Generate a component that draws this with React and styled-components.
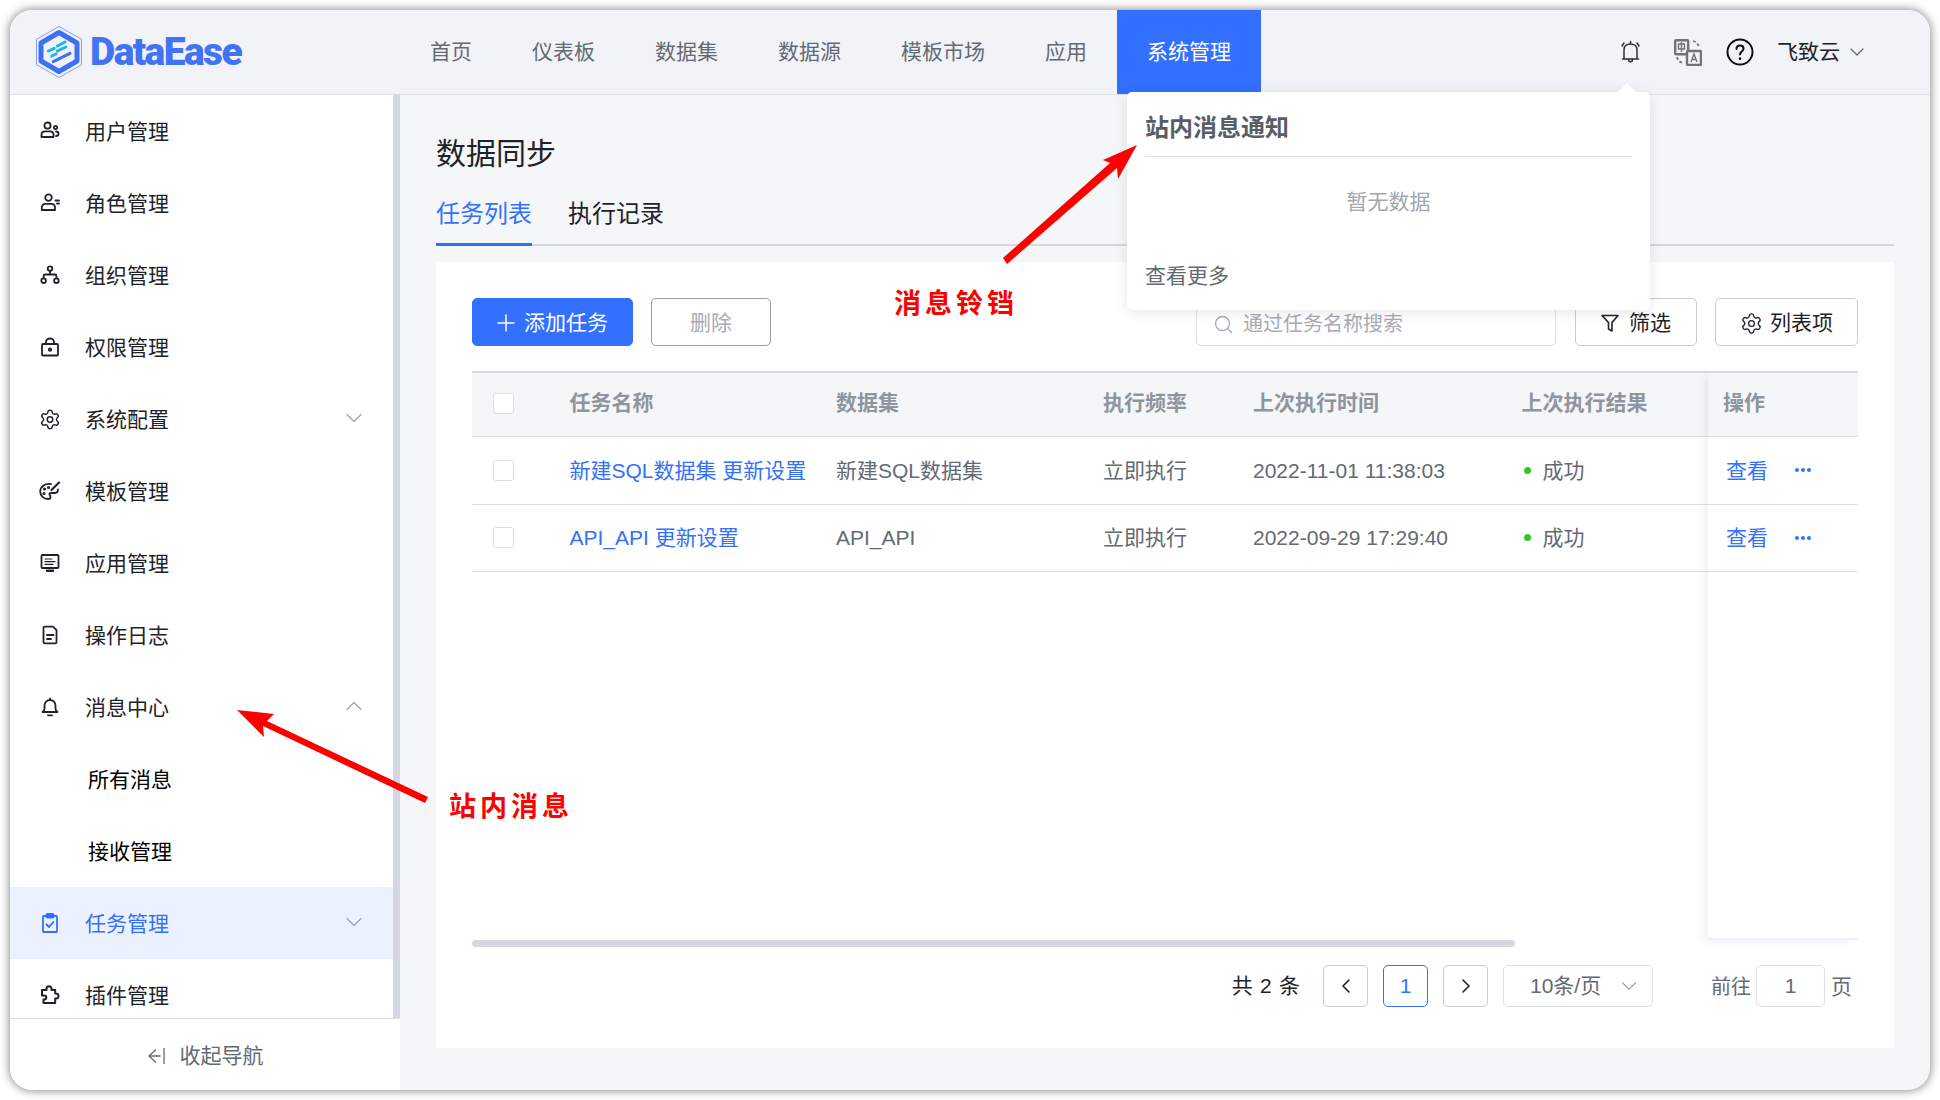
import React from 'react'
import styled, { createGlobalStyle } from 'styled-components'
import { ChevronDown, ChevronUp, ChevronLeft, ChevronRight, Settings } from 'lucide-react'

const GlobalStyle = createGlobalStyle`
  html, body { margin: 0; padding: 0; background: #fff; }
  * { box-sizing: border-box; }
  body { font-family: "Liberation Sans", "Noto Sans CJK SC", sans-serif; line-height: 1.4; color: #1f2329; }
`

const Frame = styled.div`
  padding: 10px;
  width: 1940px;
  height: 1100px;
`

const Window = styled.div`
  position: relative;
  width: 1920px;
  height: 1080px;
  border-radius: 22px;
  overflow: hidden;
  display: flex;
  flex-direction: column;
  background: #f5f6f8;
  box-shadow: 0 0 8px 1px rgba(0, 0, 0, 0.45);
`

const Header = styled.header`
  height: 85px;
  flex: none;
  display: flex;
  align-items: stretch;
  background: #f1f3f8;
  border-bottom: 1px solid #dee0e3;
`

const LogoWrap = styled.div`
  width: 390px;
  padding-left: 26px;
  display: flex;
  align-items: center;
  gap: 8px;
`

const LogoText = styled.span`
  font-family: "Roboto", "Liberation Sans", sans-serif;
  font-weight: 900;
  font-size: 39px;
  letter-spacing: -1.6px;
  color: #4273f5;
`

const Nav = styled.nav`
  display: flex;
`

const NavItem = styled.a`
  padding: 0 30px;
  display: flex;
  align-items: center;
  font-size: 21px;
  color: ${p => (p.$active ? '#fff' : '#646a73')};
  background: ${p => (p.$active ? '#3370ff' : 'transparent')};
`

const HeaderRight = styled.div`
  margin-left: auto;
  padding-right: 61px;
  display: flex;
  align-items: center;
`

const HeaderIcon = styled.span`
  display: flex;
  margin-right: ${p => p.$gap}px;
`

const UserName = styled.span`
  font-size: 21px;
  color: #1f2329;
  margin-right: 5px;
`

const Body = styled.div`
  flex: 1;
  display: flex;
  min-height: 0;
`

const Sidebar = styled.aside`
  width: 390px;
  flex: none;
  display: flex;
  flex-direction: column;
  background: #fff;
`

const MenuWrap = styled.div`
  flex: 1;
  min-height: 0;
  display: flex;
`

const Menu = styled.div`
  flex: 1;
  overflow: hidden;
`

const MenuBar = styled.div`
  width: 7px;
  background: #d5d8e2;
`

const MenuItem = styled.div`
  height: 72px;
  display: flex;
  align-items: center;
  padding: 2px 25px 0 ${p => (p.$sub ? 78 : 29)}px;
  font-size: 21px;
  color: ${p => (p.$active ? '#3370ff' : p.$sub ? '#000' : '#1f2329')};
  background: ${p => (p.$active ? '#ebf1ff' : 'transparent')};
`

const MenuIcon = styled.span`
  width: 22px;
  display: flex;
  justify-content: center;
  margin-right: 24px;
  margin-top: -2px;
`

const MenuChevron = styled.span`
  margin-left: auto;
  margin-top: -4px;
  display: flex;
  color: #a0a5ae;
`

const SideFooter = styled.div`
  height: 72px;
  flex: none;
  padding-top: 2px;
  border-top: 1px solid #dee0e3;
  display: flex;
  align-items: center;
  justify-content: center;
  gap: 15px;
  font-size: 21px;
  color: #646a73;
`

const Main = styled.main`
  flex: 1;
  min-width: 0;
  padding: 39px 36px 42px;
  display: flex;
  flex-direction: column;
`

const Title = styled.h1`
  margin: 0;
  font-size: 30px;
  font-weight: 400;
  line-height: 40px;
  color: #1f2329;
`

const Tabs = styled.div`
  margin-top: 25px;
  display: flex;
  gap: 36px;
  border-bottom: 2px solid #d5d8df;
`

const Tab = styled.div`
  font-size: 24px;
  line-height: 30px;
  padding-bottom: 14px;
  margin-bottom: -2px;
  color: ${p => (p.$active ? '#3370ff' : '#1f2329')};
  border-bottom: 3px solid ${p => (p.$active ? '#3370ff' : 'transparent')};
`

const Card = styled.section`
  flex: 1;
  margin-top: 16px;
  background: #fff;
  padding: 36px 36px 0;
  display: flex;
  flex-direction: column;
`

const Toolbar = styled.div`
  display: flex;
  height: 48px;
  margin-bottom: 25px;
`

const Button = styled.button`
  height: 48px;
  width: ${p => p.$w}px;
  margin-left: ${p => p.$ml || 0}px;
  padding: 2px 0 0;
  display: flex;
  align-items: center;
  justify-content: center;
  gap: ${p => p.$gap || 9}px;
  font: inherit;
  font-size: 21px;
  border-radius: 5px;
  color: ${p => (p.$primary ? '#fff' : p.$disabled ? '#a8abb2' : '#1f2329')};
  background: ${p => (p.$primary ? '#3370ff' : '#fff')};
  border: 1px solid ${p => (p.$primary ? '#3370ff' : p.$disabled ? '#9a9da5' : '#c8cbd1')};
`

const Search = styled.div`
  width: 360px;
  margin-left: auto;
  height: 48px;
  display: flex;
  align-items: center;
  gap: 10px;
  padding: 4px 0 0 17px;
  border: 1px solid #dcdfe6;
  border-radius: 5px;
  font-size: 20px;
  color: #a8abb2;
`

const TableWrap = styled.div`
  height: 569px;
  display: flex;
`

const TableLeft = styled.div`
  flex: 1;
  min-width: 0;
`

const FixedCol = styled.div`
  width: 150px;
  flex: none;
  background: #fff;
  border-bottom: 2px solid #ebf1ff;
  box-shadow: -6px 4px 8px -2px rgba(0, 0, 0, 0.06);
`

const HeadRow = styled.div`
  height: 66px;
  padding-bottom: 3px;
  display: grid;
  grid-template-columns: ${p => p.$cols};
  align-items: center;
  background: #f5f6f7;
  border-top: 2px solid #d5d8df;
  border-bottom: 1px solid #dee0e3;
  font-size: 21px;
  font-weight: 700;
  color: #8f959e;
`

const DataRow = styled.div`
  height: 67.5px;
  display: grid;
  grid-template-columns: ${p => p.$cols};
  align-items: center;
  border-bottom: 1px solid #dee0e3;
  font-size: 21px;
  color: #646a73;
`

const CheckCell = styled.div`
  padding-left: 21px;
  display: flex;
`

const Check = styled.span`
  width: 21px;
  height: 21px;
  background: #fff;
  border: 1px solid #dcdfe6;
  border-radius: 3px;
`

const Link = styled.a`
  color: #3370ff;
  white-space: nowrap;
`

const Status = styled.div`
  display: flex;
  align-items: center;
  padding-left: 2px;
  gap: 12px;
`

const Dot = styled.i`
  width: 7px;
  height: 7px;
  border-radius: 50%;
  background: #34c724;
`

const ActionCell = styled.div`
  display: flex;
  align-items: center;
  padding-left: ${p => p.$pl}px;
`

const More = styled.span`
  display: flex;
  gap: 2px;
  margin-left: 27px;
`

const MoreDot = styled.i`
  width: 4px;
  height: 4px;
  border-radius: 50%;
  background: #3370ff;
`

const ScrollThumb = styled.div`
  height: 7px;
  width: 1043px;
  border-radius: 4px;
  background: #d5d8e2;
`

const Pager = styled.div`
  margin-top: 18px;
  display: flex;
  justify-content: flex-end;
  align-items: center;
  padding-right: 6px;
  font-size: 21px;
  color: #646a73;
`

const Total = styled.span`
  color: #1f2329;
  word-spacing: 1.5px;
  margin-right: 23px;
`

const PageBtn = styled.span`
  width: 45px;
  height: 42px;
  margin-right: ${p => p.$mr}px;
  display: flex;
  align-items: center;
  justify-content: center;
  border-radius: 5px;
  border: 1px solid ${p => (p.$active ? '#3370ff' : '#c8cbd1')};
  color: ${p => (p.$active ? '#3370ff' : '#1f2329')};
`

const PageSelect = styled.span`
  width: 150px;
  height: 42px;
  display: flex;
  align-items: center;
  padding: 0 10px 0 26px;
  justify-content: space-between;
  border: 1px solid #dee0e3;
  border-radius: 5px;
`

const PageInput = styled.span`
  width: 69px;
  height: 42px;
  margin: 0 6px 0 5px;
  display: flex;
  align-items: center;
  justify-content: center;
  border: 1px solid #dee0e3;
  border-radius: 5px;
`

const PageText = styled.span`
  margin-left: ${p => p.$ml || 0}px;
  margin-top: 2px;
  font-size: ${p => p.$size || 21}px;
`

const Popover = styled.div`
  position: absolute;
  left: 1117px;
  top: 82px;
  width: 523px;
  height: 218px;
  padding: 0 18px;
  background: #fff;
  border-radius: 5px;
  box-shadow: 0 2px 14px rgba(0, 0, 0, 0.1);

  &::before {
    content: '';
    position: absolute;
    left: 493px;
    top: -6px;
    width: 14px;
    height: 14px;
    background: #fff;
    transform: rotate(45deg);
  }
`

const PopTitle = styled.div`
  padding: 20px 0 12px;
  line-height: 32px;
  font-size: 24px;
  font-weight: 700;
  color: #595e66;
  border-bottom: 1px solid #dee0e3;
`

const PopEmpty = styled.div`
  height: 90px;
  display: flex;
  align-items: center;
  justify-content: center;
  font-size: 21px;
  color: #a3a6ad;
`

const PopMore = styled.div`
  margin-top: 14px;
  line-height: 30px;
  font-size: 21px;
  color: #646a73;
`

const Note = styled.div`
  position: absolute;
  left: ${p => p.$x}px;
  top: ${p => p.$y}px;
  font-family: "Noto Sans CJK SC", sans-serif;
  font-size: 27px;
  line-height: 32px;
  font-weight: 700;
  letter-spacing: 4px;
  color: #ff0000;
`

const ArrowLayer = styled.svg`
  position: absolute;
  left: 0;
  top: 0;
  pointer-events: none;
`

const Svg = ({ w = 20, h = 20, vb = '0 0 20 20', sw = 1.8, color = 'currentColor', children }) => (
  <svg width={w} height={h} viewBox={vb} fill='none' stroke={color} strokeWidth={sw} strokeLinecap='round' strokeLinejoin='round'>
    {children}
  </svg>
)

const Logo = () => (
  <svg width='46' height='52' viewBox='0 0 46 52' fill='none'>
    <path d='M23 .5 45.5 13.2v25.6L23 51.5.5 38.8V13.2z' stroke='#7f9df8' strokeWidth='1' />
    <path d='M23 6.5 41 17v18L23 45.5 5 35V17z' stroke='#3f6ff4' strokeWidth='5' strokeLinejoin='round' />
    <g strokeWidth='3' strokeLinecap='round'>
      <path d='M21.3 20 29 16M12.3 25l6-2.7M21.3 25l8.7-4' stroke='#16b8f3' />
      <path d='M15.7 30l4.3-2' stroke='#16b8f3' />
      <path d='M17.3 35.7 34 27.3' stroke='#3f6ff4' />
    </g>
  </svg>
)

const UsersIcon = () => (
  <Svg>
    <circle cx='7.5' cy='4.6' r='3.1' />
    <path d='M1.5 16v-2.2c0-2 1.6-3.4 3.6-3.4h4.8c2 0 3.6 1.4 3.6 3.4V16z' />
    <circle cx='15.5' cy='6.5' r='1.6' />
    <path d='M16 10.5c1.6 0 2.6 1 2.6 2.3 0 1.3-1 2.2-2.6 2.2' />
  </Svg>
)

const RoleIcon = () => (
  <Svg>
    <circle cx='8.5' cy='4.6' r='3.3' />
    <path d='M1.8 17v-2.4c0-2.2 1.6-3.8 3.8-3.8h5.8c2 0 3.4 1.4 3.6 3V17z' />
    <path d='M15.5 7.5h3.5M17 10.5h2' />
  </Svg>
)

const OrgIcon = () => (
  <Svg>
    <circle cx='10' cy='3.6' r='2.3' />
    <circle cx='3.6' cy='15.7' r='2.3' />
    <circle cx='16.4' cy='15.7' r='2.3' />
    <path d='M10 6v3.5M3.6 13.3V11c0-.9.6-1.5 1.5-1.5h9.8c.9 0 1.5.6 1.5 1.5v2.3' />
  </Svg>
)

const LockIcon = () => (
  <Svg>
    <rect x='2' y='7' width='16' height='11.5' rx='1' />
    <path d='M6 7V5.2C6 3 7.8 1.5 10 1.5s4 1.5 4 3.7V7' />
    <circle cx='10' cy='12.7' r='1.2' />
  </Svg>
)

const GearIcon = () => <Settings size={23} strokeWidth={1.6} />

const PaletteIcon = () => (
  <Svg w={22} h={20} vb='0 0 22 20'>
    <path d='M12 3.2C6.5 2 1.2 5.5 1.2 10.5c0 4.2 3.6 7.5 7.8 7.5 1.5 0 2.5-.8 2.5-2 0-1.2-1-1.5-1-2.5 0-1 1-1.5 2-1.5h3.5c2 0 3-1.5 3-3.5' />
    <path d='M20 1.5 12.5 9' strokeWidth='2.2' />
    <circle cx='5.5' cy='8' r='.7' />
    <circle cx='5' cy='12.5' r='.7' />
    <circle cx='9.5' cy='6.5' r='.7' />
  </Svg>
)

const ScreenIcon = () => (
  <Svg>
    <rect x='1.5' y='2' width='17' height='13' rx='1' />
    <path d='M5 6h7M5 8.7h10M5 11.3h8' strokeWidth='1.2' />
    <path d='M7 17.7h6' strokeWidth='2.4' />
  </Svg>
)

const DocIcon = () => (
  <Svg>
    <path d='M3.5 2.8c0-.7.5-1.2 1.2-1.2H13l3.5 3.5v12.1c0 .7-.5 1.2-1.2 1.2H4.7c-.7 0-1.2-.5-1.2-1.2z' />
    <path d='M7 10h6.5M7 14h4' />
  </Svg>
)

const BellIcon = () => (
  <Svg>
    <path d='M2.5 15c1.5-1 2-2 2-3.5v-3a5.500 5.500 0 0 1 11 0v3c0 1.5.5 2.5 2 3.5z' />
    <path d='M8 18.3h4M10 1.5V3' />
  </Svg>
)

const ClipIcon = () => (
  <Svg>
    <rect x='3' y='3' width='14' height='16' rx='.8' />
    <rect x='6.5' y='1' width='7' height='3.5' rx='.8' />
    <path d='m6.5 11.5 2.5 2.5 4.500-5' />
  </Svg>
)

const PuzzleIcon = () => (
  <Svg sw={2}>
    <path d='M6.5 5V3.7a2.5 2.5 0 0 1 5 0V5h3.700v3.500h.8a2.500 2.500 0 0 1 0 5h-.8V18H3.500v-3.500h.8a2 2 0 0 0 0-4H2V5z' />
  </Svg>
)

const CollapseIcon = () => (
  <Svg w={18} h={18} vb='0 0 18 18' sw={1.3}>
    <path d='M8.5 3 2 9l6.5 6M2 9h11M17 1.5v15' />
  </Svg>
)

const SearchIcon = () => (
  <Svg w={19} h={19} vb='0 0 19 19' sw={1.4}>
    <circle cx='8.5' cy='8.5' r='7' />
    <path d='m13.5 13.5 4 4' />
  </Svg>
)

const FilterIcon = () => (
  <Svg w={18} h={18} vb='0 0 18 18' sw={1.6}>
    <path d='M1 1.5h16L11 8.500v8.500L7.500 15V8.500z' />
  </Svg>
)

const HeaderBell = () => (
  <Svg w={21} h={24} vb='0 0 21 24' sw={1.5} color='#2b2f36'>
    <path d='M4 19V9.5C4 6 6.800 4 10.500 4S17 6 17 9.500V19zM2.500 19h16M8.500 19.500c0 3 4 3 4 0M2 6l2-3M19 6l-2-3M10.500 1.500V4' />
  </Svg>
)

const TranslateIcon = () => (
  <svg width='28' height='27' viewBox='0 0 28 27' fill='none' stroke='#6f747b' strokeWidth='2.4'>
    <rect x='1.2' y='1.2' width='13' height='14' rx='1' />
    <rect x='13' y='12' width='14' height='14' rx='1' fill='#f1f3f8' />
    <path d='M4.5 5h6v5h-6zM7.5 3v10' strokeWidth='1.4' />
    <path d='m17 23 3-8 3 8M18 20.5h4' strokeWidth='1.4' />
    <path d='M19 2c3 .5 5 2.5 6 6M3 18c.5 3 2.5 5 6 6' strokeWidth='1.7' strokeDasharray='3 2' />
  </svg>
)

const HelpIcon = () => (
  <Svg w={28} h={28} vb='0 0 28 28' sw={2} color='#111'>
    <circle cx='14' cy='14' r='12.5' />
    <path d='M10.5 11c0-2.300 1.600-3.500 3.500-3.500s3.500 1.300 3.500 3.200c0 2.800-3.500 2.800-3.500 5.800' />
    <path d='M14 20.5v.3' strokeWidth='2.6' />
  </Svg>
)

const menu = [
  { label: '用户管理', icon: <UsersIcon /> },
  { label: '角色管理', icon: <RoleIcon /> },
  { label: '组织管理', icon: <OrgIcon /> },
  { label: '权限管理', icon: <LockIcon /> },
  { label: '系统配置', icon: <GearIcon />, arrow: 'down' },
  { label: '模板管理', icon: <PaletteIcon /> },
  { label: '应用管理', icon: <ScreenIcon /> },
  { label: '操作日志', icon: <DocIcon /> },
  { label: '消息中心', icon: <BellIcon />, arrow: 'up' },
  { label: '所有消息', sub: true },
  { label: '接收管理', sub: true },
  { label: '任务管理', icon: <ClipIcon />, arrow: 'down', active: true },
  { label: '插件管理', icon: <PuzzleIcon /> }
]

const navs = ['首页', '仪表板', '数据集', '数据源', '模板市场', '应用', '系统管理']

const rows = [
  { name: '新建SQL数据集 更新设置', set: '新建SQL数据集', time: '2022-11-01 11:38:03' },
  { name: 'API_API 更新设置', set: 'API_API', time: '2022-09-29 17:29:40' }
]

const cols = '97.5px 266.5px 267px 150px 268.5px 1fr'

function App () {
  return (
    <Frame>
      <GlobalStyle />
      <Window>
        <Header>
          <LogoWrap>
            <Logo />
            <LogoText>DataEase</LogoText>
          </LogoWrap>
          <Nav>
            {navs.map(n => (
              <NavItem key={n} $active={n === '系统管理'}>{n}</NavItem>
            ))}
          </Nav>
          <HeaderRight>
            <HeaderIcon $gap={33}><HeaderBell /></HeaderIcon>
            <HeaderIcon $gap={24}><TranslateIcon /></HeaderIcon>
            <HeaderIcon $gap={23}><HelpIcon /></HeaderIcon>
            <UserName>飞致云</UserName>
            <ChevronDown size={24} strokeWidth={1.3} color='#646a73' />
          </HeaderRight>
        </Header>
        <Body>
          <Sidebar>
            <MenuWrap>
              <Menu>
                {menu.map(m => (
                  <MenuItem key={m.label} $sub={m.sub} $active={m.active}>
                    {m.icon && <MenuIcon>{m.icon}</MenuIcon>}
                    {m.label}
                    {m.arrow && (
                      <MenuChevron>
                        {m.arrow === 'up' ? <ChevronUp size={28} strokeWidth={1.1} /> : <ChevronDown size={28} strokeWidth={1.1} />}
                      </MenuChevron>
                    )}
                  </MenuItem>
                ))}
              </Menu>
              <MenuBar />
            </MenuWrap>
            <SideFooter>
              <CollapseIcon />
              收起导航
            </SideFooter>
          </Sidebar>
          <Main>
            <Title>数据同步</Title>
            <Tabs>
              <Tab $active>任务列表</Tab>
              <Tab>执行记录</Tab>
            </Tabs>
            <Card>
              <Toolbar>
                <Button $primary $w={161}>
                  <Svg w={18} h={18} vb='0 0 18 18' sw={1.5}><path d='M9 1v16M1 9h16' /></Svg>
                  添加任务
                </Button>
                <Button $disabled $w={120} $ml={18}>删除</Button>
                <Search>
                  <SearchIcon />
                  通过任务名称搜索
                </Search>
                <Button $w={122} $ml={19} $gap={10}><FilterIcon />筛选</Button>
                <Button $w={143} $ml={18} $gap={7}><Settings size={23} strokeWidth={1.4} />列表项</Button>
              </Toolbar>
              <TableWrap>
                <TableLeft>
                  <HeadRow $cols={cols}>
                    <CheckCell><Check /></CheckCell>
                    <div>任务名称</div>
                    <div>数据集</div>
                    <div>执行频率</div>
                    <div>上次执行时间</div>
                    <div>上次执行结果</div>
                  </HeadRow>
                  {rows.map(r => (
                    <DataRow key={r.name} $cols={cols}>
                      <CheckCell><Check /></CheckCell>
                      <Link>{r.name}</Link>
                      <div>{r.set}</div>
                      <div>立即执行</div>
                      <div>{r.time}</div>
                      <Status><Dot />成功</Status>
                    </DataRow>
                  ))}
                </TableLeft>
                <FixedCol>
                  <HeadRow $cols='1fr'>
                    <ActionCell $pl={15}>操作</ActionCell>
                  </HeadRow>
                  {rows.map(r => (
                    <DataRow key={r.name} $cols='1fr'>
                      <ActionCell $pl={18}>
                        <Link>查看</Link>
                        <More><MoreDot /><MoreDot /><MoreDot /></More>
                      </ActionCell>
                    </DataRow>
                  ))}
                </FixedCol>
              </TableWrap>
              <ScrollThumb />
              <Pager>
                <Total>共 2 条</Total>
                <PageBtn $mr={15}><ChevronLeft size={24} strokeWidth={1.6} /></PageBtn>
                <PageBtn $mr={15} $active>1</PageBtn>
                <PageBtn $mr={15}><ChevronRight size={24} strokeWidth={1.6} /></PageBtn>
                <PageSelect>10条/页<ChevronDown size={26} strokeWidth={1.1} color='#a0a5ae' /></PageSelect>
                <PageText $ml={58} $size={20}>前往</PageText>
                <PageInput>1</PageInput>
                <PageText>页</PageText>
              </Pager>
            </Card>
          </Main>
        </Body>
        <Popover>
          <PopTitle>站内消息通知</PopTitle>
          <PopEmpty>暂无数据</PopEmpty>
          <PopMore>查看更多</PopMore>
        </Popover>
        <Note $x={884} $y={276}>消息铃铛</Note>
        <Note $x={439} $y={779}>站内消息</Note>
        <ArrowLayer width='1920' height='1080' viewBox='10 10 1920 1080'>
          <polygon fill='#ff0000' points='1137,145 1103,160 1110,163 1003,258 1007,264 1117,168 1118,179' />
          <polygon fill='#ff0000' points='237,710 274,714 267,721 428,797 425,803 263,726 264,737' />
        </ArrowLayer>
      </Window>
    </Frame>
  )
}

export default App
